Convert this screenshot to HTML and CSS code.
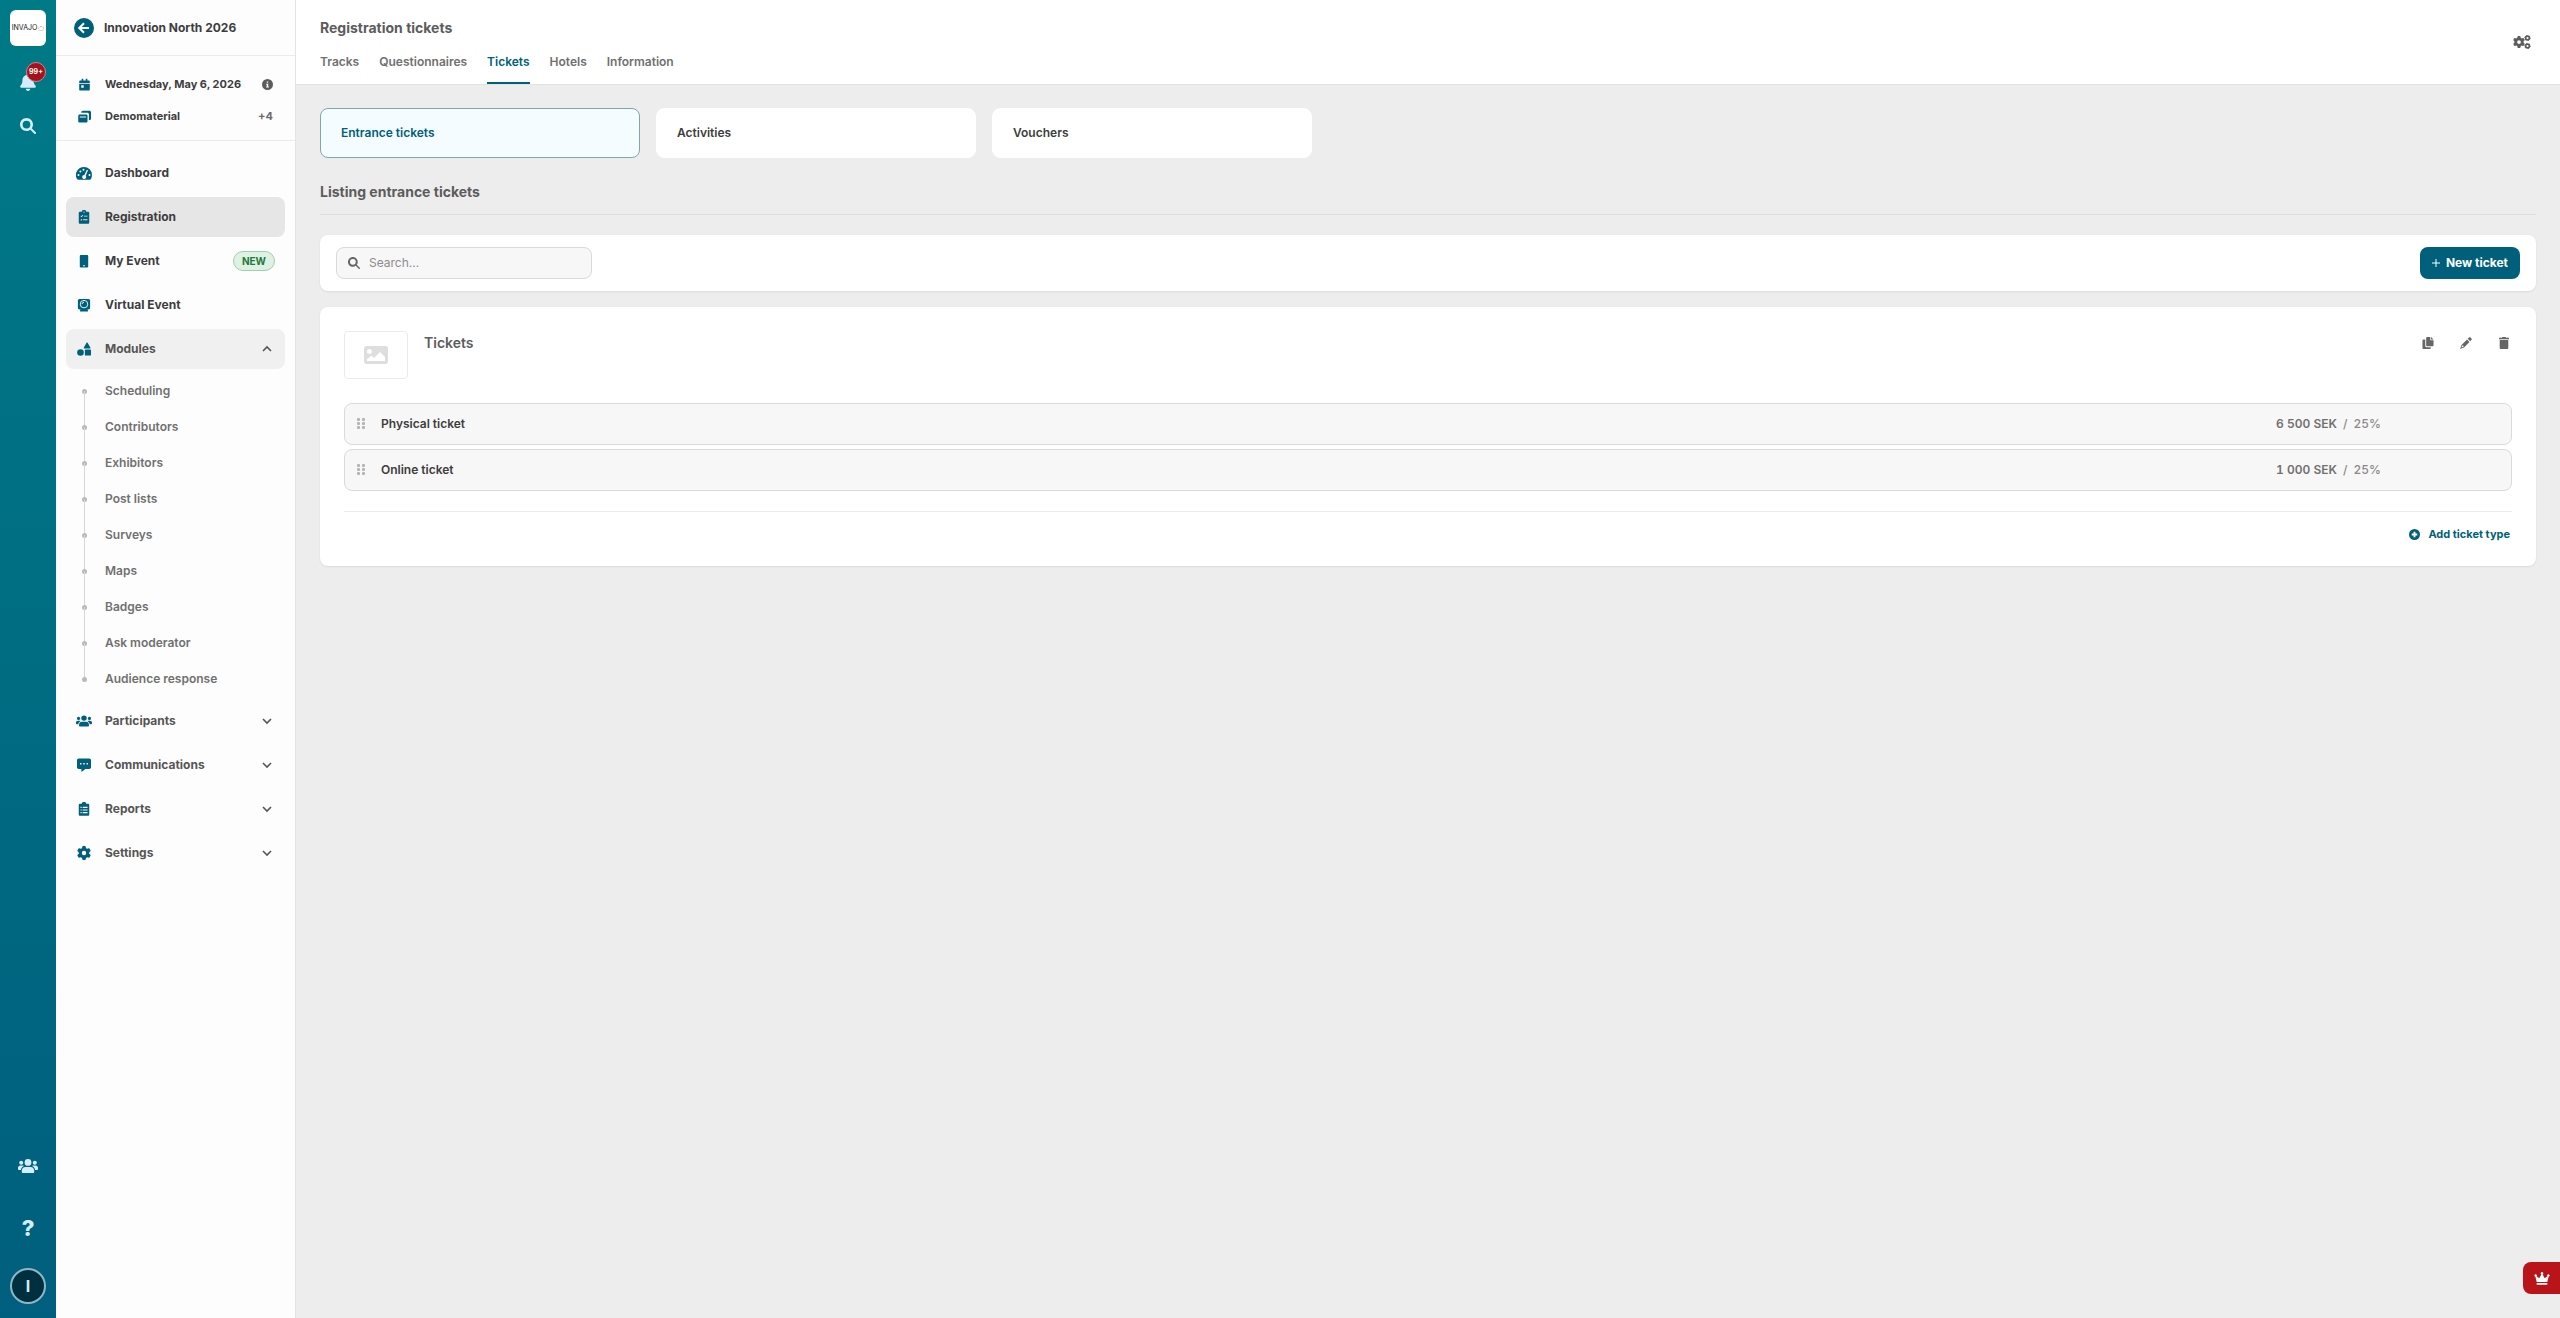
FILE: index.html
```html
<!DOCTYPE html>
<html lang="en">
<head>
    <meta charset="UTF-8">
    <meta name="viewport" content="width=device-width, initial-scale=1.0">
    <title>Registration tickets</title>
    <link rel="stylesheet" href="styles.css">
</head>
<body>

<svg class="sprite" aria-hidden="true">
    <symbol id="i-bell" viewBox="0 0 448 512"><path d="M224 0c-17.7 0-32 14.3-32 32V51.2C119 66 64 130.6 64 208v18.8c0 47-17.3 92.4-48.5 127.6l-7.4 8.3c-8.4 9.4-10.4 22.9-5.3 34.4S19.4 416 32 416H416c12.6 0 24-7.4 29.2-18.9s3.1-25-5.3-34.4l-7.4-8.3C401.3 319.2 384 273.9 384 226.8V208c0-77.4-55-142-128-156.8V32c0-17.7-14.3-32-32-32zm45.3 493.3c12-12 18.7-28.3 18.7-45.3H224 160c0 17 6.7 33.3 18.7 45.3s28.3 18.7 45.3 18.7s33.3-6.7 45.3-18.7z"/></symbol>
    <symbol id="i-search" viewBox="0 0 512 512"><path d="M416 208c0 45.9-14.9 88.3-40 122.7L502.6 457.4c12.5 12.5 12.5 32.8 0 45.3s-32.8 12.5-45.3 0L330.7 376c-34.4 25.2-76.8 40-122.7 40C93.1 416 0 322.9 0 208S93.1 0 208 0S416 93.1 416 208zM208 332a124 124 0 1 0 0-248 124 124 0 1 0 0 248z"/></symbol>
    <symbol id="i-gear" viewBox="0 0 512 512"><path d="M495.9 166.6c3.2 8.7 .5 18.4-6.4 24.6l-43.3 39.4c1.1 8.3 1.7 16.8 1.7 25.4s-.6 17.1-1.7 25.4l43.3 39.4c6.9 6.2 9.6 15.9 6.4 24.6c-4.4 11.9-9.7 23.3-15.8 34.3l-4.7 8.1c-6.6 11-14 21.4-22.1 31.2c-5.9 7.2-15.7 9.6-24.5 6.8l-55.7-17.7c-13.4 10.3-28.2 18.9-44 25.4l-12.5 57.1c-2 9.1-9 16.3-18.2 17.8c-13.8 2.3-28 3.5-42.5 3.5s-28.7-1.2-42.5-3.5c-9.2-1.5-16.2-8.7-18.2-17.8l-12.5-57.1c-15.8-6.5-30.6-15.1-44-25.4L83.1 425.9c-8.8 2.8-18.6 .3-24.5-6.8c-8.1-9.8-15.5-20.2-22.1-31.2l-4.7-8.1c-6.1-11-11.4-22.4-15.8-34.3c-3.2-8.7-.5-18.4 6.4-24.6l43.3-39.4C64.6 273.1 64 264.6 64 256s.6-17.1 1.7-25.4L22.4 191.2c-6.9-6.2-9.6-15.9-6.4-24.6c4.4-11.9 9.7-23.3 15.8-34.3l4.7-8.1c6.6-11 14-21.4 22.1-31.2c5.9-7.2 15.7-9.6 24.5-6.8l55.7 17.7c13.4-10.3 28.2-18.9 44-25.4l12.5-57.1c2-9.1 9-16.3 18.2-17.8C227.3 1.2 241.5 0 256 0s28.7 1.2 42.5 3.5c9.2 1.5 16.2 8.7 18.2 17.8l12.5 57.1c15.8 6.5 30.6 15.1 44 25.4l55.7-17.7c8.8-2.8 18.6-.3 24.5 6.8c8.1 9.8 15.5 20.2 22.1 31.2l4.7 8.1c6.1 11 11.4 22.4 15.8 34.3zM256 336a80 80 0 1 0 0-160 80 80 0 1 0 0 160z"/></symbol>
    <symbol id="i-users" viewBox="0 0 20 16"><circle cx="10" cy="4.4" r="3.4"/><circle cx="3.2" cy="4.8" r="2"/><circle cx="16.8" cy="4.8" r="2"/><path d="M7.5 9h5c2.200 0 3.700 1.600 3.700 3.700V14c0 .6-.4 1-1 1H4.800c-.6 0-1-.4-1-1v-1.300C3.800 10.600 5.300 9 7.500 9zM2.500 7.600h1.800c.6 0 1.100.1 1.500.4C4 9 3.100 10.300 2.900 12H1c-.6 0-1-.4-1-1v-.9c0-1.500 1-2.500 2.500-2.500zM17.500 7.600h-1.800c-.6 0-1.100.1-1.500.4 1.800 1 2.700 2.300 2.900 4H19c.6 0 1-.4 1-1v-.9c0-1.500-1-2.500-2.500-2.500z"/></symbol>
    <symbol id="i-calendar" viewBox="0 0 16 16"><path fill-rule="evenodd" d="M4.500 1h2v2h3V1h2v2H13c1 0 1.500.6 1.500 1.500V6h-13V4.500C1.500 3.600 2 3 3 3h1.500zM1.500 7h13v7c0 .9-.6 1.500-1.500 1.500H3c-.9 0-1.500-.6-1.500-1.500zM4 9v3h3V9z"/></symbol>
    <symbol id="i-clone" viewBox="0 0 16 16"><path fill-rule="evenodd" d="M2 5.500h8c1 0 1.700.7 1.700 1.700v6.600c0 1-.7 1.700-1.700 1.700H2c-1 0-1.700-.7-1.700-1.700V7.200c0-1 .7-1.700 1.700-1.700zM2.200 8v1.300h7.600V8z"/><path d="M4 3.300C4 1.900 4.900 1 6.200 1H14c1.200 0 2 .8 2 2v7.500c0 1.200-.8 2-2.600 2V5.200c0-1.200-.7-1.900-1.900-1.900z"/></symbol>
    <symbol id="i-gauge" viewBox="0 0 16 14"><path fill-rule="evenodd" d="M8 1a8 8 0 0 1 8 8c0 1.500-.4 2.800-1 4-.3.500-.8.800-1.400.8H2.400c-.6 0-1.100-.3-1.400-.8A8 8 0 0 1 8 1zm-5.500 7a1 1 0 1 0 0 2 1 1 0 0 0 0-2zm1.900-3.500a1 1 0 1 0 0 2 1 1 0 0 0 0-2zM7.500 2.700a1 1 0 1 0 0 2 1 1 0 0 0 0-2zM13.500 8a1 1 0 1 0 0 2 1 1 0 0 0 0-2zm-2.600-4.300L8.400 9A2 2 0 1 0 9.700 9.700L12 4.200z"/></symbol>
    <symbol id="i-checklist" viewBox="0 0 12 16"><path fill-rule="evenodd" d="M3.500 2A2.500 2.200 0 0 1 8.500 2H10.500c.9 0 1.500.6 1.500 1.500v10.700c0 .9-.6 1.500-1.500 1.500h-9C.6 15.700 0 15.100 0 14.200V3.500C0 2.600.6 2 1.500 2zM6 1.600a.8.800 0 1 0 0 1.600.8.800 0 0 0 0-1.600zM2 7l1.200 1.400 2-2.400-.7-.5-1.400 1.500-.5-.6zM6 6.500v1h4v-1zM2.300 10.500v1.500h1.500v-1.500zM5 10.700v1h5v-1z"/></symbol>
    <symbol id="i-list" viewBox="0 0 12 16"><path fill-rule="evenodd" d="M3.500 2A2.500 2.200 0 0 1 8.500 2H10.500c.9 0 1.500.6 1.500 1.500v10.700c0 .9-.6 1.500-1.500 1.500h-9C.6 15.700 0 15.100 0 14.200V3.500C0 2.600.6 2 1.500 2zM2 5.500v1.300h1.300V5.500zm2.500 0v1.300H10V5.500zM2 8.500v1.300h1.300V8.500zm2.500 0v1.300H10V8.500zM2 11.500v1.300h1.300v-1.300zm2.500 0v1.300H10v-1.300z"/></symbol>
    <symbol id="i-mobile" viewBox="0 0 10 16"><path fill-rule="evenodd" d="M1.500 1h7c.8 0 1.300.5 1.300 1.300v11.900c0 .8-.5 1.300-1.300 1.300h-7c-.8 0-1.300-.5-1.300-1.300V2.300C.2 1.500.7 1 1.500 1zM4 12.800V14h2v-1.200z"/></symbol>
    <symbol id="i-webcam" viewBox="0 0 16 16"><path d="M3 1h10c1.200 0 2 .8 2 2v8c0 1.200-.8 2-2 2h-1.200l.7 1v1.500h-9V14l.7-1H3c-1.200 0-2-.8-2-2V3c0-1.200.8-2 2-2z"/><g fill="none" stroke="#fff"><circle cx="8" cy="7" r="4.300"/><path d="M5.800 7A2.200 2.200 0 0 1 8 4.800"/></g></symbol>
    <symbol id="i-shapes" viewBox="0 0 16 16"><path d="M11.500.5c.3 0 .5.100.6.400l3.300 5.700c.2.500 0 .9-.5.900H8.200c-.5 0-.8-.4-.5-.9L10.900.9c.1-.3.300-.4.600-.4z"/><circle cx="4" cy="12" r="3.800"/><rect x="9" y="8.500" width="7" height="7" rx="1"/></symbol>
    <symbol id="i-chat" viewBox="0 0 16 16"><path fill-rule="evenodd" d="M2 .5h12c1.100 0 2 .8 2 2v8c0 1.200-.9 2-2 2H9.500L5.500 15.700c-.3.200-.5 0-.5-.3v-2.900H2c-1.100 0-2-.8-2-2v-8c0-1.200.9-2 2-2zM3.500 5.700v1.600h1.600V5.700zm3.700 0v1.600h1.600V5.700zm3.700 0v1.600h1.600V5.700z"/></symbol>
    <symbol id="i-up" viewBox="0 0 10 10"><path fill="none" stroke="currentColor" stroke-width="1.600" d="M1 7l4-4 4 4"/></symbol>
    <symbol id="i-down" viewBox="0 0 10 10"><path fill="none" stroke="currentColor" stroke-width="1.600" d="M1 3l4 4 4-4"/></symbol>
    <symbol id="i-info" viewBox="0 0 16 16"><path fill-rule="evenodd" d="M8 0a8 8 0 1 1 0 16A8 8 0 0 1 8 0zM7 3.500v2h2v-2zM6 7v1.500h1v2.500H6v1.500h4V11H9V7z"/></symbol>
    <symbol id="i-image" viewBox="0 0 24 18"><path fill-rule="evenodd" d="M2.500 0h19C23 0 24 1 24 2.500v13c0 1.500-1 2.500-2.500 2.500h-19C1 18 0 17 0 15.500v-13C0 1 1 0 2.500 0zM5.500 3a2.500 2.500 0 1 0 0 5 2.500 2.500 0 0 0 0-5zM3 15h18v-4l-5-5-6 6-2.500-2.500L3 13z"/></symbol>
    <symbol id="i-grip" viewBox="0 0 8 12"><rect width="3" height="3" rx="1"/><rect x="5" width="3" height="3" rx="1"/><rect y="4" width="3" height="3" rx="1"/><rect x="5" y="4" width="3" height="3" rx="1"/><rect y="8" width="3" height="3" rx="1"/><rect x="5" y="8" width="3" height="3" rx="1"/></symbol>
    <symbol id="i-copy" viewBox="0 0 12 13"><path d="M5 0h3.500v3.500H12V9c0 .6-.4 1-1 1H5c-.6 0-1-.4-1-1V1c0-.6.4-1 1-1zM9.300 0L12 2.700H9.300zM1 2.700h2V9.500C3 10.400 3.600 11 4.500 11H9v1c0 .6-.4 1-1 1H1c-.6 0-1-.4-1-1V3.700c0-.6.4-1 1-1z"/></symbol>
    <symbol id="i-pencil" viewBox="0 0 12 12"><path fill-rule="evenodd" d="M8.900.6c.5-.5 1.200-.5 1.700 0l.8.8c.5.500.5 1.200 0 1.700L10.200 4.300 7.700 1.800zM7 2.500L9.500 5 4 10.500 0 12l1.500-4zM2.200 8.500L1.500 10.500l2-.7v-1z"/></symbol>
    <symbol id="i-trash" viewBox="0 0 10 12"><path d="M3.300 0h3.400l.4.800H10v1.500H0V.8h2.900zM.7 3h8.600v7.700c0 .8-.5 1.300-1.300 1.300H2C1.200 12 .7 11.500.7 10.700z"/></symbol>
    <symbol id="i-crown" viewBox="0 0 16 13"><path d="M8 0a1.300 1.300 0 0 1 .7 2.400l2 3.800 2.700-1.900A1.200 1.200 0 1 1 14.600 4.700L13.300 10H2.700L1.400 4.700A1.200 1.200 0 1 1 2.600 4.300l2.700 1.900 2-3.800A1.300 1.300 0 0 1 8 0zM2.700 11h10.600v1.700H2.700z"/></symbol>
</svg>

<div class="app">
    <div class="rail">
        <a href="#" class="brand">INVAJO<span class="brand-mark"></span></a>
        <button class="rail-btn bell" aria-label="Notifications">
            <svg><use href="#i-bell"/></svg>
            <span class="count">99+</span>
        </button>
        <button class="rail-btn" aria-label="Search"><svg><use href="#i-search"/></svg></button>
        <div class="rail-bottom">
            <button class="rail-btn users" aria-label="Users"><svg><use href="#i-users"/></svg></button>
            <button class="rail-btn help" aria-label="Help">?</button>
            <button class="avatar">I</button>
        </div>
    </div>

    <aside class="sidebar">
        <div class="event">
            <a href="#" class="back" aria-label="Back">
                <svg viewBox="0 0 20 20"><path d="M15 10H5.500M10 5.200L5.200 10l4.800 4.800"/></svg>
            </a>
            <span>Innovation North 2026</span>
        </div>
        <div class="event-info">
            <div class="info-row">
                <span class="ico"><svg><use href="#i-calendar"/></svg></span>
                <span>Wednesday, May 6, 2026</span>
                <svg class="info-icon"><use href="#i-info"/></svg>
            </div>
            <div class="info-row">
                <span class="ico"><svg><use href="#i-clone"/></svg></span>
                <span>Demomaterial</span>
                <span class="more">+4</span>
            </div>
        </div>
        <nav class="menu">
            <a href="#" class="item"><span class="ico wide"><svg><use href="#i-gauge"/></svg></span>Dashboard</a>
            <a href="#" class="item active"><span class="ico"><svg><use href="#i-checklist"/></svg></span>Registration</a>
            <a href="#" class="item"><span class="ico"><svg><use href="#i-mobile"/></svg></span>My Event<span class="new">NEW</span></a>
            <a href="#" class="item"><span class="ico"><svg><use href="#i-webcam"/></svg></span>Virtual Event</a>
            <button class="item group open"><span class="ico"><svg><use href="#i-shapes"/></svg></span>Modules<svg class="chevron"><use href="#i-up"/></svg></button>
            <ul class="submenu">
                <li><a href="#">Scheduling</a></li>
                <li><a href="#">Contributors</a></li>
                <li><a href="#">Exhibitors</a></li>
                <li><a href="#">Post lists</a></li>
                <li><a href="#">Surveys</a></li>
                <li><a href="#">Maps</a></li>
                <li><a href="#">Badges</a></li>
                <li><a href="#">Ask moderator</a></li>
                <li><a href="#">Audience response</a></li>
            </ul>
            <button class="item group"><span class="ico wide"><svg><use href="#i-users"/></svg></span>Participants<svg class="chevron"><use href="#i-down"/></svg></button>
            <button class="item group"><span class="ico"><svg><use href="#i-chat"/></svg></span>Communications<svg class="chevron"><use href="#i-down"/></svg></button>
            <button class="item group"><span class="ico"><svg><use href="#i-list"/></svg></span>Reports<svg class="chevron"><use href="#i-down"/></svg></button>
            <button class="item group"><span class="ico"><svg><use href="#i-gear"/></svg></span>Settings<svg class="chevron"><use href="#i-down"/></svg></button>
        </nav>
    </aside>

    <main class="main">
        <header class="header">
            <div>
                <h1>Registration tickets</h1>
                <nav class="tabs">
                    <a href="#">Tracks</a>
                    <a href="#">Questionnaires</a>
                    <a href="#" class="current">Tickets</a>
                    <a href="#">Hotels</a>
                    <a href="#">Information</a>
                </nav>
            </div>
            <button class="icon-btn config" aria-label="Configure">
                <svg viewBox="0 0 18 14">
                    <use href="#i-gear" x="0" y="1" width="12" height="12"/>
                    <g fill="none" stroke="currentColor" stroke-width="1.700">
                        <circle cx="14.500" cy="3" r="1.900"/><circle cx="14.500" cy="11" r="1.900"/>
                    </g>
                    <g fill="none" stroke="currentColor" stroke-dasharray="1 1.800">
                        <circle cx="14.500" cy="3" r="2.700"/><circle cx="14.500" cy="11" r="2.700"/>
                    </g>
                </svg>
            </button>
        </header>

        <div class="content">
            <div class="cards">
                <a href="#" class="card selected">Entrance tickets</a>
                <a href="#" class="card">Activities</a>
                <a href="#" class="card">Vouchers</a>
            </div>

            <h2>Listing entrance tickets</h2>

            <div class="toolbar">
                <label class="search">
                    <svg><use href="#i-search"/></svg>
                    <input type="text" placeholder="Search..." aria-label="Search tickets">
                </label>
                <button class="btn-new"><svg viewBox="0 0 8 8"><path d="M4 0v8M0 4h8"/></svg>New ticket</button>
            </div>

            <section class="panel">
                <div class="panel-head">
                    <div class="thumb"><svg><use href="#i-image"/></svg></div>
                    <h3>Tickets</h3>
                    <div class="actions">
                        <button class="icon-btn" aria-label="Copy"><svg><use href="#i-copy"/></svg></button>
                        <button class="icon-btn" aria-label="Edit"><svg><use href="#i-pencil"/></svg></button>
                        <button class="icon-btn" aria-label="Delete"><svg><use href="#i-trash"/></svg></button>
                    </div>
                </div>
                <ul class="tickets">
                    <li>
                        <svg class="grip"><use href="#i-grip"/></svg>
                        <span class="name">Physical ticket</span>
                        <span class="price"><b>6 500 SEK</b><span>/</span><span>25%</span></span>
                    </li>
                    <li>
                        <svg class="grip"><use href="#i-grip"/></svg>
                        <span class="name">Online ticket</span>
                        <span class="price"><b>1 000 SEK</b><span>/</span><span>25%</span></span>
                    </li>
                </ul>
                <div class="panel-foot">
                    <button class="btn-add">
                        <svg viewBox="0 0 12 12"><circle cx="6" cy="6" r="6"/><path d="M6 3v6M3 6h6"/></svg>
                        Add ticket type
                    </button>
                </div>
            </section>
        </div>
    </main>
</div>

<button class="crown" aria-label="Upgrade"><svg><use href="#i-crown"/></svg></button>

</body>
</html>
```
FILE: styles.css
```css
* {
    box-sizing: border-box;
}
body {
    margin: 0;
    font-family: Inter, "Liberation Sans", sans-serif;
    font-size: 12px;
    line-height: 16px;
    font-weight: 600;
    color: #3d3d3d;
    background-color: #ededed;
}
a {
    color: inherit;
    text-decoration: none;
}
button {
    font: inherit;
    color: inherit;
    background: none;
    border: 0;
    padding: 0;
    cursor: pointer;
}
ul {
    list-style: none;
    margin: 0;
    padding: 0;
}
h1, h2, h3 {
    margin: 0;
    font-size: 14px;
    line-height: 20px;
    font-weight: 700;
    color: #5c5c5c;
}
svg {
    display: block;
    fill: currentColor;
}
.sprite {
    position: absolute;
    width: 0;
    height: 0;
}
.app {
    display: flex;
    min-height: 100vh;
}

/* left rail */
.rail {
    width: 56px;
    flex: none;
    display: flex;
    flex-direction: column;
    align-items: center;
    padding: 10px 0 14px;
    color: #d3eefa;
    background: linear-gradient(#007a87, #005f7e);
}
.brand {
    width: 36px;
    height: 36px;
    display: flex;
    align-items: center;
    justify-content: center;
    border-radius: 6px;
    background-color: #fff;
    color: #222;
    font-size: 7px;
    font-weight: 400;
    margin-bottom: 14px;
}
.brand-mark {
    width: 6px;
    height: 5px;
    margin-left: 1px;
    border: 1px dotted #c9a56a;
    border-radius: 50%;
}
.rail-btn {
    position: relative;
    width: 36px;
    height: 44px;
    display: flex;
    align-items: center;
    justify-content: center;
}
.rail-btn svg {
    width: 16px;
    height: 16px;
}
.rail-btn.bell svg {
    height: 18px;
}
.rail-btn.users svg {
    width: 20px;
}
.count {
    position: absolute;
    top: 2px;
    right: 0;
    width: 20px;
    height: 20px;
    border: 1px solid #c9848c;
    border-radius: 50%;
    background-color: #a3131c;
    color: #fff;
    font-size: 7px;
    line-height: 18px;
    font-weight: 700;
}
.rail-bottom {
    margin-top: auto;
    display: flex;
    flex-direction: column;
    align-items: center;
    gap: 18px;
}
.help {
    font-size: 22px;
    font-weight: 800;
}
.avatar {
    width: 36px;
    height: 36px;
    border: 2px solid #8fb5c6;
    border-radius: 50%;
    background-color: #00303f;
    font-size: 16px;
    font-weight: 700;
}

/* event sidebar */
.sidebar {
    width: 240px;
    flex: none;
    background-color: #fdfdfd;
    border-right: 1px solid #e4e4e4;
    font-weight: 700;
}
.event {
    display: flex;
    align-items: center;
    gap: 10px;
    height: 56px;
    padding-left: 18px;
    border-bottom: 1px solid #ebebeb;
}
.back {
    width: 20px;
    height: 20px;
    border-radius: 50%;
    background-color: #005f7a;
}
.back path {
    fill: none;
    stroke: #fff;
    stroke-width: 2;
}
.event-info {
    padding: 12px 10px 8px;
    border-bottom: 1px solid #ebebeb;
    font-size: 11px;
}
.info-row {
    display: flex;
    align-items: center;
    height: 32px;
    padding-right: 12px;
}
.info-row .ico svg {
    width: 13px;
    height: 13px;
}
.info-row .info-icon {
    width: 11px;
    height: 11px;
    margin-left: auto;
    color: #5c5c5c;
}
.more {
    margin-left: auto;
    color: #6b6b6b;
}
.ico {
    width: 36px;
    flex: none;
    margin-right: 3px;
    color: #005f7a;
}
.ico svg {
    width: 14px;
    height: 14px;
    margin: 0 auto;
}
.ico.wide svg {
    width: 16px;
}
.menu {
    display: flex;
    flex-direction: column;
    gap: 4px;
    padding: 12px 10px;
}
.item {
    display: flex;
    align-items: center;
    height: 40px;
    padding-right: 10px;
    border-radius: 8px;
    text-align: left;
}
.item.active {
    background-color: #e6e6e6;
}
.item.open {
    background-color: #f0f0f0;
}
.item.group {
    color: #555;
}
.chevron {
    width: 10px;
    height: 10px;
    margin: 0 3px 0 auto;
}
.new {
    margin-left: auto;
    padding: 0 8px;
    border: 1px solid #9fcfae;
    border-radius: 10px;
    background-color: #def1e3;
    color: #1d7a3c;
    font-size: 10px;
    line-height: 18px;
}
.submenu li {
    position: relative;
    color: #707070;
    font-weight: 600;
}
.submenu a {
    display: block;
    padding: 10px 0 10px 39px;
}
.submenu li::before {
    content: "";
    position: absolute;
    left: 16px;
    top: 16px;
    width: 5px;
    height: 5px;
    border-radius: 50%;
    background-color: #b9b9b9;
}
.submenu li:not(:last-child)::after {
    content: "";
    position: absolute;
    left: 18px;
    top: 18px;
    width: 1px;
    height: 36px;
    background-color: #d6d6d6;
}

/* page header */
.main {
    flex: 1;
    min-width: 0;
}
.header {
    display: flex;
    justify-content: space-between;
    align-items: center;
    height: 85px;
    padding: 0 24px;
    background-color: #fff;
    border-bottom: 1px solid #e2e2e2;
}
.header h1 {
    padding-top: 18px;
}
.tabs {
    display: flex;
    gap: 20px;
    margin-top: 16px;
}
.tabs a {
    height: 30px;
    color: #707070;
}
.tabs .current {
    color: #005f7a;
    border-bottom: 2px solid #005f7a;
}
.icon-btn {
    width: 38px;
    height: 24px;
    color: #666;
}
.icon-btn svg {
    width: 12px;
    height: 12px;
    margin: 0 auto;
}
.config {
    width: 28px;
    color: #5c5c5c;
}
.config svg {
    width: 18px;
    height: 14px;
}

/* page content */
.content {
    padding: 23px 24px;
}
.cards {
    display: flex;
    gap: 16px;
}
.card {
    width: 320px;
    padding: 16px 20px;
    border: 1px solid #fff;
    border-radius: 8px;
    background-color: #fff;
}
.card.selected {
    border-color: #7fa5b5;
    background-color: #f5fcff;
    color: #005f7a;
}
h2 {
    margin: 24px 0 20px;
    padding-bottom: 12px;
    border-bottom: 1px solid #dedede;
}
.toolbar,
.panel {
    background-color: #fff;
    border-radius: 8px;
    box-shadow: 0 1px 2px rgba(0, 0, 0, 0.08);
}
.toolbar {
    display: flex;
    justify-content: space-between;
    padding: 12px 16px;
    margin-bottom: 16px;
}
.search {
    display: flex;
    align-items: center;
    gap: 9px;
    width: 256px;
    height: 32px;
    padding: 0 11px;
    border: 1px solid #d9d9d9;
    border-radius: 8px;
    background-color: #f7f7f7;
    color: #666;
}
.search svg {
    width: 12px;
    height: 12px;
}
.search input {
    flex: 1;
    min-width: 0;
    padding: 0;
    border: 0;
    outline: 0;
    background: none;
    font: inherit;
    font-weight: 400;
}
.search input::placeholder {
    color: #8c8c8c;
}
.btn-new {
    display: flex;
    align-items: center;
    gap: 6px;
    height: 32px;
    padding: 0 12px;
    border-radius: 8px;
    background-color: #005f7a;
    color: #fff;
    font-weight: 700;
}
.btn-new svg {
    width: 8px;
    height: 8px;
    stroke: #fff;
}
.panel {
    padding: 24px;
}
.panel-head {
    display: flex;
    margin-bottom: 24px;
}
.thumb {
    display: flex;
    align-items: center;
    justify-content: center;
    width: 64px;
    height: 48px;
    margin-right: 16px;
    border: 1px solid #ebebeb;
    border-radius: 4px;
    color: #dedede;
}
.thumb svg {
    width: 24px;
    height: 18px;
}
.panel-head h3 {
    padding-top: 2px;
    font-weight: 600;
}
.actions {
    display: flex;
    margin-left: auto;
    margin-right: -11px;
}
.tickets li {
    display: flex;
    align-items: center;
    height: 42px;
    padding-left: 12px;
    margin-bottom: 4px;
    border: 1px solid #dadada;
    border-radius: 8px;
    background-color: #f7f7f7;
}
.grip {
    width: 8px;
    height: 12px;
    margin-right: 16px;
    color: #b5b5b5;
}
.price {
    display: flex;
    gap: 6px;
    width: 235px;
    margin-left: auto;
    color: #8a8a8a;
    font-weight: 500;
    font-variant-numeric: tabular-nums;
}
.price b {
    color: #707070;
    font-weight: 600;
}
.panel-foot {
    display: flex;
    justify-content: flex-end;
    margin-top: 20px;
    padding: 14px 2px 0;
    border-top: 1px solid #ebebeb;
}
.btn-add {
    display: flex;
    align-items: center;
    gap: 8px;
    color: #005f7a;
    font-size: 11px;
    font-weight: 700;
}
.btn-add svg {
    width: 11px;
    height: 11px;
}
.btn-add path {
    stroke: #fff;
    stroke-width: 2;
}

/* upgrade tab stuck to the window edge */
.crown {
    position: fixed;
    right: 0;
    bottom: 24px;
    width: 37px;
    height: 32px;
    padding-left: 11px;
    border-radius: 8px 0 0 8px;
    background-color: #b9141a;
    color: #fff;
}
.crown svg {
    width: 16px;
    height: 13px;
}
```
